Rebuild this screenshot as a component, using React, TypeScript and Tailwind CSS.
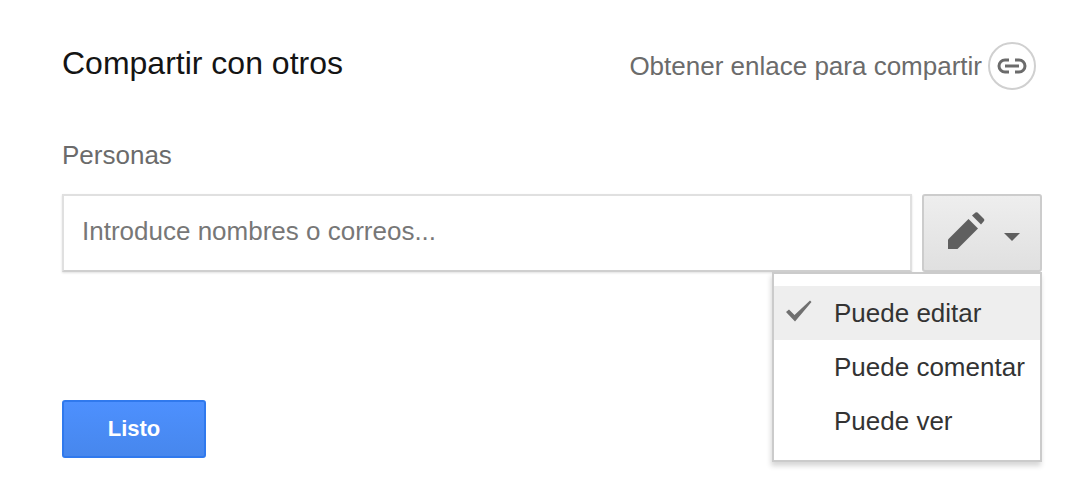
function LinkIcon() {
  return (
    <svg width="30" height="16" viewBox="0 0 30 16" fill="none" stroke="#6b6b6b" strokeWidth="3">
      <path d="M12 2H8a6 6 0 0 0 0 12h4" />
      <path d="M18 2h4a6 6 0 0 1 0 12h-4" />
      <path d="M8 8h14" />
    </svg>
  );
}

function PencilIcon() {
  return (
    <svg width="38" height="38" viewBox="0 0 38 38" fill="#5f5f5f">
      <path d="M0 27.5 L20.5 7 L30 16.5 L9.5 37 L0 37 Z" />
      <path d="M24 3.5 L27.5 0.5 Q28.5 0 29.5 0.5 L36 7 Q36.7 8 36 9 L33 12.5 Z" />
    </svg>
  );
}

function CheckIcon() {
  return (
    <svg className="absolute left-[12px] top-[14px]" width="26" height="22" viewBox="0 0 26 22" fill="#707070">
      <path d="M0 12 L3 9.5 L8.5 15 L24 0.5 L25.5 2 L9 21.5 Z" />
    </svg>
  );
}

const items = ["Puede editar", "Puede comentar", "Puede ver"];

export default function App() {
  return (
    <div className="h-[500px] w-[1092px] bg-white pl-[62px] pr-[50px] font-['Liberation_Sans',Arial,sans-serif]">
      <div className="flex h-[132px] items-start justify-between pt-[42px]">
        <h1 className="text-[32px] leading-[42px] text-[#141414]">Compartir con otros</h1>
        <div className="mr-[6px] flex items-center gap-[6px]">
          <span className="text-[26px] leading-[48px] text-[#6b6b6b]">Obtener enlace para compartir</span>
          <span className="flex h-[48px] w-[48px] items-center justify-center rounded-full border-2 border-[#d0d0d0]">
            <LinkIcon />
          </span>
        </div>
      </div>

      <div className="text-[26px] leading-[46px] text-[#6b6b6b]">Personas</div>

      <div className="relative mt-[16px] flex h-[78px] gap-[10px]">
        <div className="flex flex-1 items-center border-2 border-[#e0e0e0] border-b-[#cfcfcf] px-[18px] pb-[3px] text-[26px] text-[#777777] shadow-[0_1px_2px_rgba(0,0,0,0.12)]">
          Introduce nombres o correos...
        </div>
        <div className="flex w-[120px] items-center rounded-[3px] border-2 border-[#cccccc] bg-gradient-to-b from-[#eeeeee] to-[#e0e0e0] pb-[4px] pl-[24px]">
          <PencilIcon />
          <span className="ml-[18px] mt-[12px] h-0 w-0 border-x-[8px] border-t-[8px] border-x-transparent border-t-[#5f5f5f]" />
        </div>

        <div className="absolute right-0 top-[78px] h-[190px] w-[270px] border-2 border-[#cbcbcb] bg-white py-[12px] shadow-[-1px_4px_5px_rgba(0,0,0,0.16)]">
          {items.map((item, i) => (
            <div
              key={item}
              className={`flex h-[54px] items-center pl-[60px] text-[26px] text-[#333333] ${i === 0 ? "relative bg-[#eeeeee]" : ""}`}
            >
              {i === 0 && <CheckIcon />}
              {item}
            </div>
          ))}
        </div>
      </div>

      <button className="mt-[128px] block h-[58px] w-[144px] rounded-[3px] border-2 border-[#3079ed] bg-gradient-to-b from-[#4d90fe] to-[#4787ed] pb-[2px] text-[22px] font-bold text-white">
        Listo
      </button>
    </div>
  );
}
